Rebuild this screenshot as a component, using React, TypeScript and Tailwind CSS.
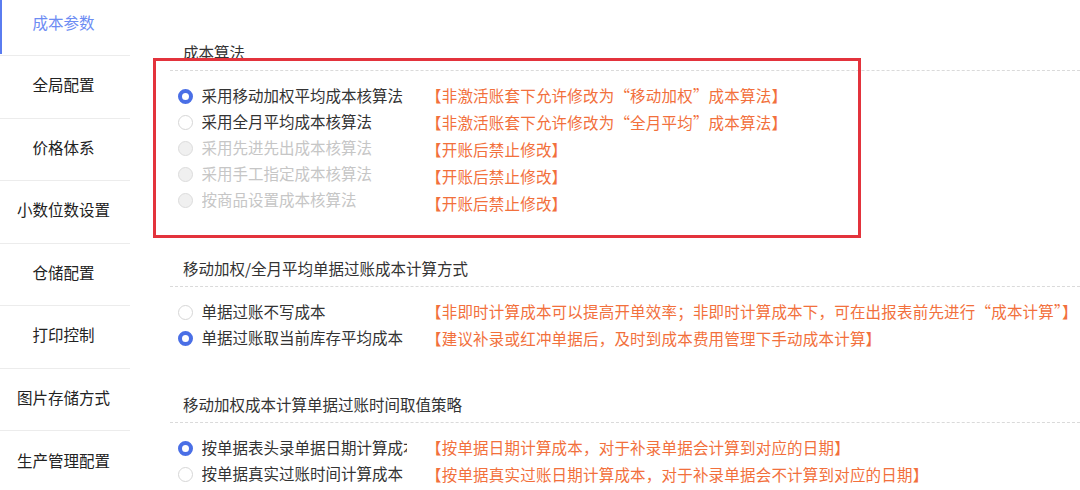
import React from 'react';

type RadioState = 'checked' | 'unchecked' | 'disabled';

interface Option {
  label: string;
  state: RadioState;
}

interface Section {
  title: string;
  options: Option[];
  hints: string[];
  gap: string; // top margin of the section heading
}

const menu = ['成本参数', '全局配置', '价格体系', '小数位数设置', '仓储配置', '打印控制', '图片存储方式', '生产管理配置'];

const sections: Section[] = [
  {
    title: '成本算法',
    gap: 'mt-[42px]',
    options: [
      { label: '采用移动加权平均成本核算法', state: 'checked' },
      { label: '采用全月平均成本核算法', state: 'unchecked' },
      { label: '采用先进先出成本核算法', state: 'disabled' },
      { label: '采用手工指定成本核算法', state: 'disabled' },
      { label: '按商品设置成本核算法', state: 'disabled' },
    ],
    hints: [
      '【非激活账套下允许修改为“移动加权”成本算法】',
      '【非激活账套下允许修改为“全月平均”成本算法】',
      '【开账后禁止修改】',
      '【开账后禁止修改】',
      '【开账后禁止修改】',
    ],
  },
  {
    title: '移动加权/全月平均单据过账成本计算方式',
    gap: 'mt-[41px]',
    options: [
      { label: '单据过账不写成本', state: 'unchecked' },
      { label: '单据过账取当前库存平均成本', state: 'checked' },
    ],
    hints: [
      '【非即时计算成本可以提高开单效率；非即时计算成本下，可在出报表前先进行“成本计算”】',
      '【建议补录或红冲单据后，及时到成本费用管理下手动成本计算】',
    ],
  },
  {
    title: '移动加权成本计算单据过账时间取值策略',
    gap: 'mt-[42px]',
    options: [
      { label: '按单据表头录单据日期计算成本', state: 'checked' },
      { label: '按单据真实过账时间计算成本', state: 'unchecked' },
    ],
    hints: [
      '【按单据日期计算成本，对于补录单据会计算到对应的日期】',
      '【按单据真实过账日期计算成本，对于补录单据会不计算到对应的日期】',
    ],
  },
];

const Radio: React.FC<{ state: RadioState }> = ({ state }) => {
  if (state === 'checked') {
    return <span className="w-[15px] h-[15px] rounded-full border-[4px] border-[#4a6fe6] bg-white shrink-0" />;
  }
  if (state === 'disabled') {
    return <span className="w-[15px] h-[15px] rounded-full border border-[#dcdcdc] bg-[#f0f0f0] shrink-0" />;
  }
  return <span className="w-[15px] h-[15px] rounded-full border border-[#d6d6d6] bg-white shrink-0" />;
};

export default function App() {
  return (
    <div
      className="relative w-[1080px] h-[490px] overflow-hidden bg-white flex text-[15.5px] text-[#333]"
      style={{ fontFamily: '"Noto Sans CJK SC", "Noto Sans", sans-serif' }}
    >
      {/* Sidebar menu */}
      <div className="w-[130px] shrink-0 flex flex-col -mt-[6.5px]">
        {menu.map((item, i) => (
          <div
            key={item}
            className={`relative h-[62.5px] shrink-0 flex items-center justify-center pr-[3px] pb-[4px] ${
              i < menu.length - 1 ? 'border-b border-[#ececec]' : ''
            } ${i === 0 ? 'text-[#6d8cf3]' : 'text-[#222]'}`}
          >
            {i === 0 && <span className="absolute left-0 top-0 bottom-[1px] w-[2px] bg-[#5a7cf0]" />}
            {item}
          </div>
        ))}
      </div>

      {/* Settings */}
      <div className="flex-1 min-w-0 pl-[40px] flex flex-col">
        {sections.map((s) => (
          <div key={s.title} className={s.gap}>
            <div className="leading-[20px] pl-[13px]">{s.title}</div>
            <div className="mt-[8px] border-t border-dashed border-[#dadada]" />
            <div className="flex pt-[12px]">
              <div className="w-[256px] shrink-0 pl-[7.5px] flex flex-col">
                {s.options.map((o) => (
                  <div key={o.label} className="h-[26px] flex items-center gap-[9px]">
                    <Radio state={o.state} />
                    <span
                      className={`w-[205px] overflow-hidden whitespace-nowrap ${
                        o.state === 'disabled' ? 'text-[#c6c6c6]' : 'text-[#333]'
                      }`}
                    >
                      {o.label}
                    </span>
                  </div>
                ))}
              </div>
              <div className="flex flex-col -mt-[1px] text-[#f2703c] tracking-[0.2px]">
                {s.hints.map((h, i) => (
                  <div key={i} className="h-[27px] flex items-center whitespace-nowrap">
                    {h}
                  </div>
                ))}
              </div>
            </div>
          </div>
        ))}
      </div>

      {/* Red highlight annotation */}
      <div className="absolute left-[153px] top-[58px] w-[708px] h-[180px] border-[3px] border-[#e3333c] pointer-events-none" />
    </div>
  );
}
